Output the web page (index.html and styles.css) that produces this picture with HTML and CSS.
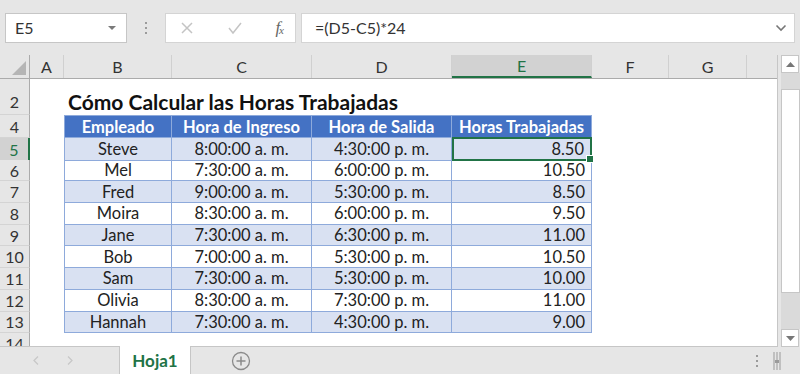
FILE: index.html
```html
<!DOCTYPE html>
<html lang="es">
  <head>
    <meta charset="UTF-8" />
    <title>Horas Trabajadas</title>
    <link rel="stylesheet" href="styles.css">
  </head>
  <body>
    <div class="toolbar">
      <div class="name-box">
        <span>E5</span>
        <svg class="caret" width="10" height="6" viewBox="0 0 10 6"><path d="M1 1h8L5 5z" fill="#7a7a7a"/></svg>
      </div>
      <div class="grip">
        <span></span><span></span><span></span>
      </div>
      <div class="fx-buttons">
        <svg width="14" height="14" viewBox="0 0 14 14"><path d="M2 2l10 10M12 2L2 12" stroke="#c4c4c4" stroke-width="1.5" fill="none"/></svg>
        <svg width="16" height="14" viewBox="0 0 16 14"><path d="M2 7l4 5 8-10" stroke="#c4c4c4" stroke-width="1.5" fill="none"/></svg>
        <span class="fx">f<sub>x</sub></span>
      </div>
      <div class="formula">
        <span>=(D5-C5)*24</span>
        <svg width="12" height="8" viewBox="0 0 12 8"><path d="M1.5 1.5l4.5 4.5 4.5-4.5" stroke="#777" stroke-width="1.6" fill="none"/></svg>
      </div>
    </div>

    <div class="sheet">
      <div class="grid">
        <div class="row col-head">
          <div class="corner">
            <svg width="14" height="14" viewBox="0 0 14 14"><path d="M14 0v14H0z" fill="#b5b5b5"/></svg>
          </div>
          <div class="ch">A</div>
          <div class="ch">B</div>
          <div class="ch">C</div>
          <div class="ch">D</div>
          <div class="ch active">E</div>
          <div class="ch">F</div>
          <div class="ch">G</div>
          <div class="ch last"></div>
        </div>

        <div class="row title-row">
          <div class="rh rh-bottom">2</div>
          <div></div>
          <div class="title">Cómo Calcular las Horas Trabajadas</div>
          <div></div><div></div><div></div><div></div><div></div><div></div>
        </div>

        <div class="row head-row">
          <div class="rh">4</div>
          <div></div>
          <div class="th first">Empleado</div>
          <div class="th">Hora de Ingreso</div>
          <div class="th">Hora de Salida</div>
          <div class="th">Horas Trabajadas</div>
          <div></div><div></div><div></div>
        </div>

        <div class="row data band">
          <div class="rh active">5</div>
          <div></div>
          <div class="td first">Steve</div>
          <div class="td">8:00:00 a. m.</div>
          <div class="td">4:30:00 p. m.</div>
          <div class="td num selected">8.50</div>
          <div></div><div></div><div></div>
        </div>
        <div class="row data">
          <div class="rh">6</div>
          <div></div>
          <div class="td first">Mel</div>
          <div class="td">7:30:00 a. m.</div>
          <div class="td">6:00:00 p. m.</div>
          <div class="td num">10.50</div>
          <div></div><div></div><div></div>
        </div>
        <div class="row data band">
          <div class="rh">7</div>
          <div></div>
          <div class="td first">Fred</div>
          <div class="td">9:00:00 a. m.</div>
          <div class="td">5:30:00 p. m.</div>
          <div class="td num">8.50</div>
          <div></div><div></div><div></div>
        </div>
        <div class="row data">
          <div class="rh">8</div>
          <div></div>
          <div class="td first">Moira</div>
          <div class="td">8:30:00 a. m.</div>
          <div class="td">6:00:00 p. m.</div>
          <div class="td num">9.50</div>
          <div></div><div></div><div></div>
        </div>
        <div class="row data band">
          <div class="rh">9</div>
          <div></div>
          <div class="td first">Jane</div>
          <div class="td">7:30:00 a. m.</div>
          <div class="td">6:30:00 p. m.</div>
          <div class="td num">11.00</div>
          <div></div><div></div><div></div>
        </div>
        <div class="row data">
          <div class="rh">10</div>
          <div></div>
          <div class="td first">Bob</div>
          <div class="td">7:00:00 a. m.</div>
          <div class="td">5:30:00 p. m.</div>
          <div class="td num">10.50</div>
          <div></div><div></div><div></div>
        </div>
        <div class="row data band">
          <div class="rh">11</div>
          <div></div>
          <div class="td first">Sam</div>
          <div class="td">7:30:00 a. m.</div>
          <div class="td">5:30:00 p. m.</div>
          <div class="td num">10.00</div>
          <div></div><div></div><div></div>
        </div>
        <div class="row data">
          <div class="rh">12</div>
          <div></div>
          <div class="td first">Olivia</div>
          <div class="td">8:30:00 a. m.</div>
          <div class="td">7:30:00 p. m.</div>
          <div class="td num">11.00</div>
          <div></div><div></div><div></div>
        </div>
        <div class="row data band">
          <div class="rh">13</div>
          <div></div>
          <div class="td first">Hannah</div>
          <div class="td">7:30:00 a. m.</div>
          <div class="td">4:30:00 p. m.</div>
          <div class="td num">9.00</div>
          <div></div><div></div><div></div>
        </div>
        <div class="row data last-row">
          <div class="rh">14</div>
          <div></div><div></div><div></div><div></div><div></div><div></div><div></div><div></div>
        </div>
      </div>

      <div class="vscroll">
        <div class="arrow-box">
          <svg width="9" height="5" viewBox="0 0 9 5"><path d="M0 5h9L4.5 0z" fill="#777"/></svg>
        </div>
        <div class="track">
          <div class="thumb"></div>
        </div>
        <div class="arrow-box">
          <svg width="9" height="5" viewBox="0 0 9 5"><path d="M0 0h9L4.5 5z" fill="#777"/></svg>
        </div>
      </div>
    </div>

    <div class="tabbar">
      <div class="nav">
        <svg width="6" height="9" viewBox="0 0 6 9"><path d="M5 0.5L1 4.5 5 8.5" stroke="#c8c8c8" stroke-width="1.3" fill="none"/></svg>
        <svg width="6" height="9" viewBox="0 0 6 9"><path d="M1 0.5L5 4.5 1 8.5" stroke="#c8c8c8" stroke-width="1.3" fill="none"/></svg>
      </div>
      <div class="tab">Hoja1</div>
      <div class="add">
        <svg width="20" height="20" viewBox="0 0 20 20"><circle cx="10" cy="10" r="8.5" stroke="#8a8a8a" stroke-width="1.3" fill="none"/><path d="M10 5.5v9M5.5 10h9" stroke="#8a8a8a" stroke-width="1.5"/></svg>
      </div>
      <div class="spacer"></div>
      <div class="grip small">
        <span></span><span></span><span></span>
      </div>
      <div class="split">
        <svg width="8" height="20" viewBox="0 0 8 20"><path d="M1 1v18M4 1v18M7 1v18" stroke="#9a9a9a" stroke-width="1" fill="none"/><path d="M2 9h4v3H2z" fill="#9a9a9a"/></svg>
      </div>
    </div>
  </body>
</html>
```

FILE: styles.css
```css
* {
  box-sizing: border-box;
  margin: 0;
  padding: 0;
}

body {
  width: 800px;
  height: 374px;
  overflow: hidden;
  background-color: #e6e6e6;
  font-family: "Lato", "Open Sans", sans-serif;
  color: #222;
}

/* formula bar */
.toolbar {
  height: 55px;
  display: flex;
  align-items: center;
  padding: 0 5px;
}

.name-box {
  width: 122px;
  height: 30px;
  background-color: #fff;
  border: 1px solid #c6c6c6;
  display: flex;
  align-items: center;
  justify-content: space-between;
  padding: 0 9px 0 9px;
  font-size: 16px;
  color: #333;
}

.grip {
  width: 38px;
  display: flex;
  flex-direction: column;
  align-items: center;
  gap: 3px;
}

.grip span {
  width: 2px;
  height: 2px;
  background-color: #9b9b9b;
}

.fx-buttons {
  width: 131px;
  height: 30px;
  background-color: #fff;
  border: 1px solid #d4d4d4;
  display: flex;
  align-items: center;
  padding: 0 12px 0 14px;
  justify-content: space-between;
}

.fx {
  font-family: "Liberation Serif", serif;
  font-style: italic;
  font-size: 17px;
  color: #666;
  letter-spacing: -1px;
}

.fx sub {
  font-size: 11px;
  vertical-align: -1px;
}

.formula {
  flex: 1;
  height: 30px;
  margin-left: 5px;
  background-color: #fff;
  border: 1px solid #d4d4d4;
  display: flex;
  align-items: center;
  justify-content: space-between;
  padding: 0 7px 0 13px;
  font-size: 16px;
  color: #333;
}

/* sheet */
.sheet {
  height: 292px;
  display: flex;
}

.grid {
  width: 778px;
  background-color: #fff;
  border-right: 1px solid #c6c6c6;
  border-bottom: 1px solid #c6c6c6;
  overflow: hidden;
}

.row {
  display: grid;
  grid-template-columns: 30px 34px 108px 140px 140px 140px 77px 78px 1fr;
  height: 21.7px;
  font-size: 16.5px;
}

.col-head {
  height: 24px;
  background-color: #e6e6e6;
  border-bottom: 1px solid #ababab;
}

.corner {
  display: flex;
  align-items: flex-end;
  justify-content: flex-end;
  padding: 0 3px 3px 0;
  border-right: 1px solid #ababab;
}

.ch {
  display: flex;
  align-items: center;
  justify-content: center;
  border-right: 1px solid #d0d0d0;
  color: #333;
  font-size: 16px;
}

.ch.last {
  border-right: none;
}

.ch.active {
  background-color: #d2d2d2;
  color: #217346;
  border-bottom: 2px solid #217346;
}

.rh {
  background-color: #e6e6e6;
  border-right: 1px solid #ababab;
  border-bottom: 1px solid #d4d4d4;
  display: flex;
  align-items: center;
  justify-content: center;
  color: #333;
  font-size: 16px;
}

.rh.active {
  background-color: #d2d2d2;
  color: #217346;
  border-right: 2px solid #217346;
}

.rh-bottom {
  align-items: flex-end;
  padding-bottom: 3px;
}

.last-row .rh {
  align-items: flex-start;
  padding-top: 1px;
}

.title-row {
  height: 36px;
}

.title {
  align-self: end;
  padding: 0 0 1px 4px;
  white-space: nowrap;
  font-size: 21px;
  font-weight: bold;
  color: #111;
}

.head-row {
  height: 23px;
}

.th {
  background-color: #4472c4;
  color: #fff;
  font-weight: bold;
  display: flex;
  align-items: center;
  justify-content: center;
  border-top: 1px solid #8eaadb;
  border-right: 1px solid #8eaadb;
  border-bottom: 1px solid #8eaadb;
}

.th.first,
.td.first {
  border-left: 1px solid #8eaadb;
}

.td {
  display: flex;
  align-items: center;
  justify-content: center;
  border-right: 1px solid #8eaadb;
  border-bottom: 1px solid #8eaadb;
  color: #222;
}

.band .td {
  background-color: #d9e1f2;
}

.td.num {
  justify-content: flex-end;
  padding-right: 6px;
}

.td.selected {
  position: relative;
  border: 2px solid #217346;
  margin-top: -1px;
}

.td.selected::after {
  content: "";
  position: absolute;
  right: -4px;
  bottom: -4px;
  width: 6px;
  height: 6px;
  background-color: #217346;
  border: 1px solid #fff;
}

/* vertical scrollbar */
.vscroll {
  width: 22px;
  display: flex;
  flex-direction: column;
  padding-left: 3px;
}

.arrow-box {
  width: 18px;
  height: 18px;
  background-color: #fff;
  border: 1px solid #c6c6c6;
  display: flex;
  align-items: center;
  justify-content: center;
}

.track {
  flex: 1;
  background-color: #dadada;
  padding: 16px 0 36px;
}

.thumb {
  height: 100%;
  background-color: #fff;
  border: 1px solid #c6c6c6;
}

/* sheet tabs */
.tabbar {
  height: 27px;
  display: flex;
  align-items: stretch;
}

.nav {
  width: 120px;
  display: flex;
  align-items: center;
  justify-content: center;
  gap: 28px;
  padding-right: 14px;
  border-right: 1px solid #c6c6c6;
}

.tab {
  width: 71px;
  background-color: #fff;
  color: #217346;
  font-weight: bold;
  font-size: 17px;
  display: flex;
  align-items: center;
  justify-content: center;
  border-right: 1px solid #c6c6c6;
  margin-top: -1px;
}

.add {
  width: 100px;
  display: flex;
  align-items: center;
  justify-content: center;
}

.spacer {
  flex: 1;
}

.grip.small {
  width: 14px;
  justify-content: center;
}

.split {
  width: 36px;
  display: flex;
  align-items: center;
  justify-content: center;
  padding-right: 10px;
}
```
